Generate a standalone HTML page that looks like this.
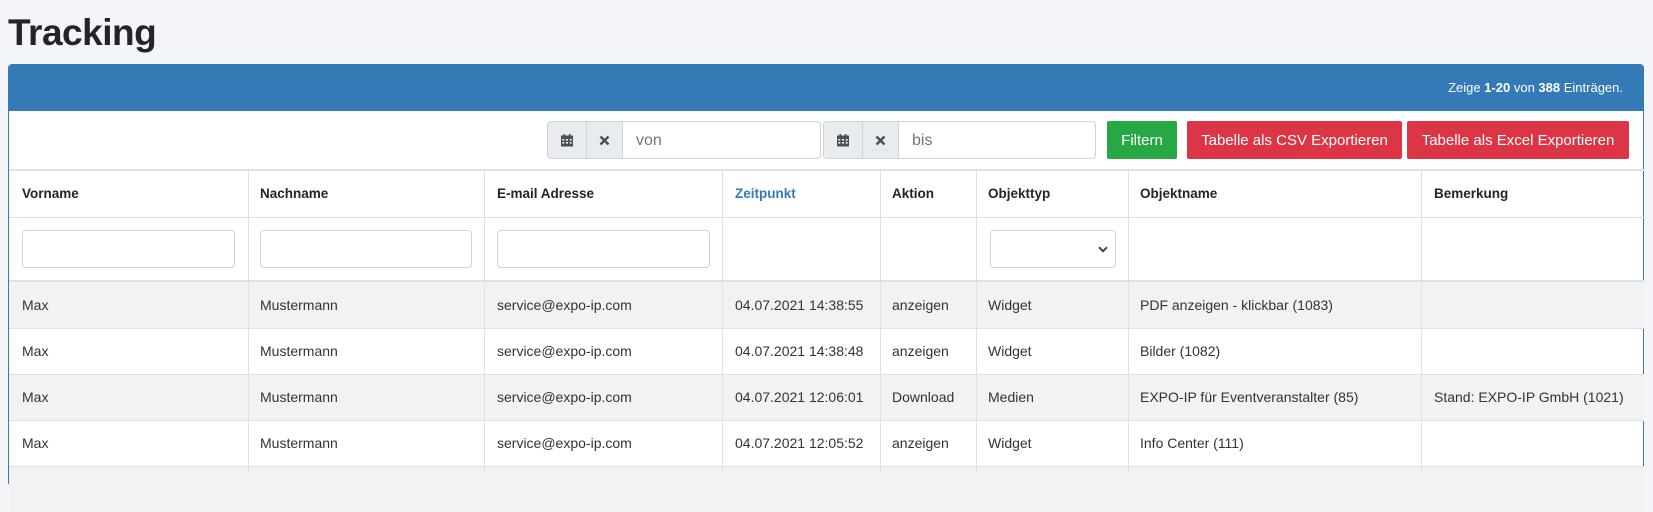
<!DOCTYPE html>
<html><head><meta charset="utf-8"><style>
*{box-sizing:border-box;margin:0;padding:0}
body{width:1653px;height:473px;overflow:hidden;background:#f4f5f8;font-family:"Liberation Sans",sans-serif;color:#212529;position:relative}
.abs{position:absolute}
h1{position:absolute;left:8px;top:12px;font-size:37px;font-weight:bold;color:#212529;letter-spacing:-0.5px}
.panel{position:absolute;left:8px;top:64px;width:1636px;height:420px;background:#fff;border:1px solid #337ab7;border-radius:4px 4px 0 0;overflow:hidden}
.head{position:absolute;left:0;top:0;right:0;height:46px;background:#337ab7;color:#fff;font-size:13px;text-align:right;padding:15px 20px 0 0}
.grp{position:absolute;top:121px;height:38px;border:1px solid #ced4da;border-radius:4px;background:#fff;overflow:hidden}
.grp .a{position:absolute;top:0;height:100%;background:#e9ecef;border-right:1px solid #ced4da;display:flex;align-items:center;justify-content:center}
.grp .t{position:absolute;top:10px;font-size:16px;color:#6c757d}
.btn{position:absolute;top:121px;height:38px;color:#fff;font-size:15px;display:flex;align-items:center;justify-content:center;border-radius:2px}
.vl{position:absolute;top:170px;width:1px;height:303px;background:#dee2e6}
.hl{position:absolute;left:9px;width:1635px;height:1px;background:#dee2e6}
.stripe{position:absolute;left:9px;width:1635px;height:46px;background:#f2f2f2}
.c{position:absolute;font-size:14px;color:#333}
.th{position:absolute;top:186px;font-size:13.5px;font-weight:bold;color:#212529}
.inp{position:absolute;top:230px;height:38px;border:1px solid #ced4da;border-radius:4px;background:#fff}
</style></head><body>
<h1>Tracking</h1>
<div class="panel"><div class="head">Zeige <b>1-20</b> von <b>388</b> Einträgen.</div></div>

<div class="grp" style="left:547px;width:274px">
 <div class="a" style="left:0;width:39px"><svg width="12" height="13" viewBox="0 0 12 13"><rect x="0" y="1.5" width="12" height="11" fill="#495057"/><rect x="2.5" y="0" width="1.6" height="3" fill="#495057"/><rect x="7.9" y="0" width="1.6" height="3" fill="#495057"/><g fill="#e9ecef"><rect x="1.3" y="5" width="2" height="1.6"/><rect x="5" y="5" width="2" height="1.6"/><rect x="8.7" y="5" width="2" height="1.6"/><rect x="1.3" y="8" width="2" height="1.6"/><rect x="5" y="8" width="2" height="1.6"/><rect x="8.7" y="8" width="2" height="1.6"/></g></svg></div>
 <div class="a" style="left:39px;width:36px"><svg width="11" height="11" viewBox="0 0 11 11"><path d="M1.5 1.5L9.5 9.5M9.5 1.5L1.5 9.5" stroke="#495057" stroke-width="2.4"/></svg></div>
 <div class="t" style="left:88px">von</div>
</div>
<div class="grp" style="left:823px;width:273px">
 <div class="a" style="left:0;width:39px"><svg width="12" height="13" viewBox="0 0 12 13"><rect x="0" y="1.5" width="12" height="11" fill="#495057"/><rect x="2.5" y="0" width="1.6" height="3" fill="#495057"/><rect x="7.9" y="0" width="1.6" height="3" fill="#495057"/><g fill="#e9ecef"><rect x="1.3" y="5" width="2" height="1.6"/><rect x="5" y="5" width="2" height="1.6"/><rect x="8.7" y="5" width="2" height="1.6"/><rect x="1.3" y="8" width="2" height="1.6"/><rect x="5" y="8" width="2" height="1.6"/><rect x="8.7" y="8" width="2" height="1.6"/></g></svg></div>
 <div class="a" style="left:39px;width:36px"><svg width="11" height="11" viewBox="0 0 11 11"><path d="M1.5 1.5L9.5 9.5M9.5 1.5L1.5 9.5" stroke="#495057" stroke-width="2.4"/></svg></div>
 <div class="t" style="left:88px">bis</div>
</div>
<div class="btn" style="left:1107px;width:70px;background:#28a745">Filtern</div>
<div class="btn" style="left:1187px;width:215px;background:#dc3545">Tabelle als CSV Exportieren</div>
<div class="btn" style="left:1407px;width:222px;background:#dc3545">Tabelle als Excel Exportieren</div>

<div class="stripe" style="top:282px"></div>
<div class="stripe" style="top:374px"></div>
<div class="stripe" style="top:466px"></div>
<div class="hl" style="top:169px;height:2px"></div>
<div class="hl" style="top:217px"></div>
<div class="hl" style="top:280px;height:2px"></div>
<div class="hl" style="top:328px"></div>
<div class="hl" style="top:374px"></div>
<div class="hl" style="top:420px"></div>
<div class="hl" style="top:466px"></div>
<div class="vl" style="left:248px"></div><div class="vl" style="left:484px"></div><div class="vl" style="left:722px"></div><div class="vl" style="left:880px"></div><div class="vl" style="left:976px"></div><div class="vl" style="left:1128px"></div><div class="vl" style="left:1421px"></div>

<div class="th" style="left:22px">Vorname</div>
<div class="th" style="left:260px">Nachname</div>
<div class="th" style="left:497px">E-mail Adresse</div>
<div class="th" style="left:735px;color:#337ab7">Zeitpunkt</div>
<div class="th" style="left:892px">Aktion</div>
<div class="th" style="left:988px">Objekttyp</div>
<div class="th" style="left:1140px">Objektname</div>
<div class="th" style="left:1434px">Bemerkung</div>

<div class="inp" style="left:22px;width:213px"></div>
<div class="inp" style="left:260px;width:212px"></div>
<div class="inp" style="left:497px;width:213px"></div>
<div class="inp" style="left:990px;width:126px"><svg class="abs" style="left:107px;top:15px" width="10" height="7" viewBox="0 0 10 7"><path d="M1 1.2L5 5.2L9 1.2" stroke="#444" stroke-width="2" fill="none"/></svg></div>

<div class="c" style="left:22px;top:297px">Max</div><div class="c" style="left:260px;top:297px">Mustermann</div><div class="c" style="left:497px;top:297px">service@expo-ip.com</div><div class="c" style="left:735px;top:297px">04.07.2021 14:38:55</div><div class="c" style="left:892px;top:297px">anzeigen</div><div class="c" style="left:988px;top:297px">Widget</div><div class="c" style="left:1140px;top:297px">PDF anzeigen - klickbar (1083)</div>
<div class="c" style="left:22px;top:343px">Max</div><div class="c" style="left:260px;top:343px">Mustermann</div><div class="c" style="left:497px;top:343px">service@expo-ip.com</div><div class="c" style="left:735px;top:343px">04.07.2021 14:38:48</div><div class="c" style="left:892px;top:343px">anzeigen</div><div class="c" style="left:988px;top:343px">Widget</div><div class="c" style="left:1140px;top:343px">Bilder (1082)</div>
<div class="c" style="left:22px;top:389px">Max</div><div class="c" style="left:260px;top:389px">Mustermann</div><div class="c" style="left:497px;top:389px">service@expo-ip.com</div><div class="c" style="left:735px;top:389px">04.07.2021 12:06:01</div><div class="c" style="left:892px;top:389px">Download</div><div class="c" style="left:988px;top:389px">Medien</div><div class="c" style="left:1140px;top:389px">EXPO-IP für Eventveranstalter (85)</div><div class="c" style="left:1434px;top:389px">Stand: EXPO-IP GmbH (1021)</div>
<div class="c" style="left:22px;top:435px">Max</div><div class="c" style="left:260px;top:435px">Mustermann</div><div class="c" style="left:497px;top:435px">service@expo-ip.com</div><div class="c" style="left:735px;top:435px">04.07.2021 12:05:52</div><div class="c" style="left:892px;top:435px">anzeigen</div><div class="c" style="left:988px;top:435px">Widget</div><div class="c" style="left:1140px;top:435px">Info Center (111)</div>
</body></html>
